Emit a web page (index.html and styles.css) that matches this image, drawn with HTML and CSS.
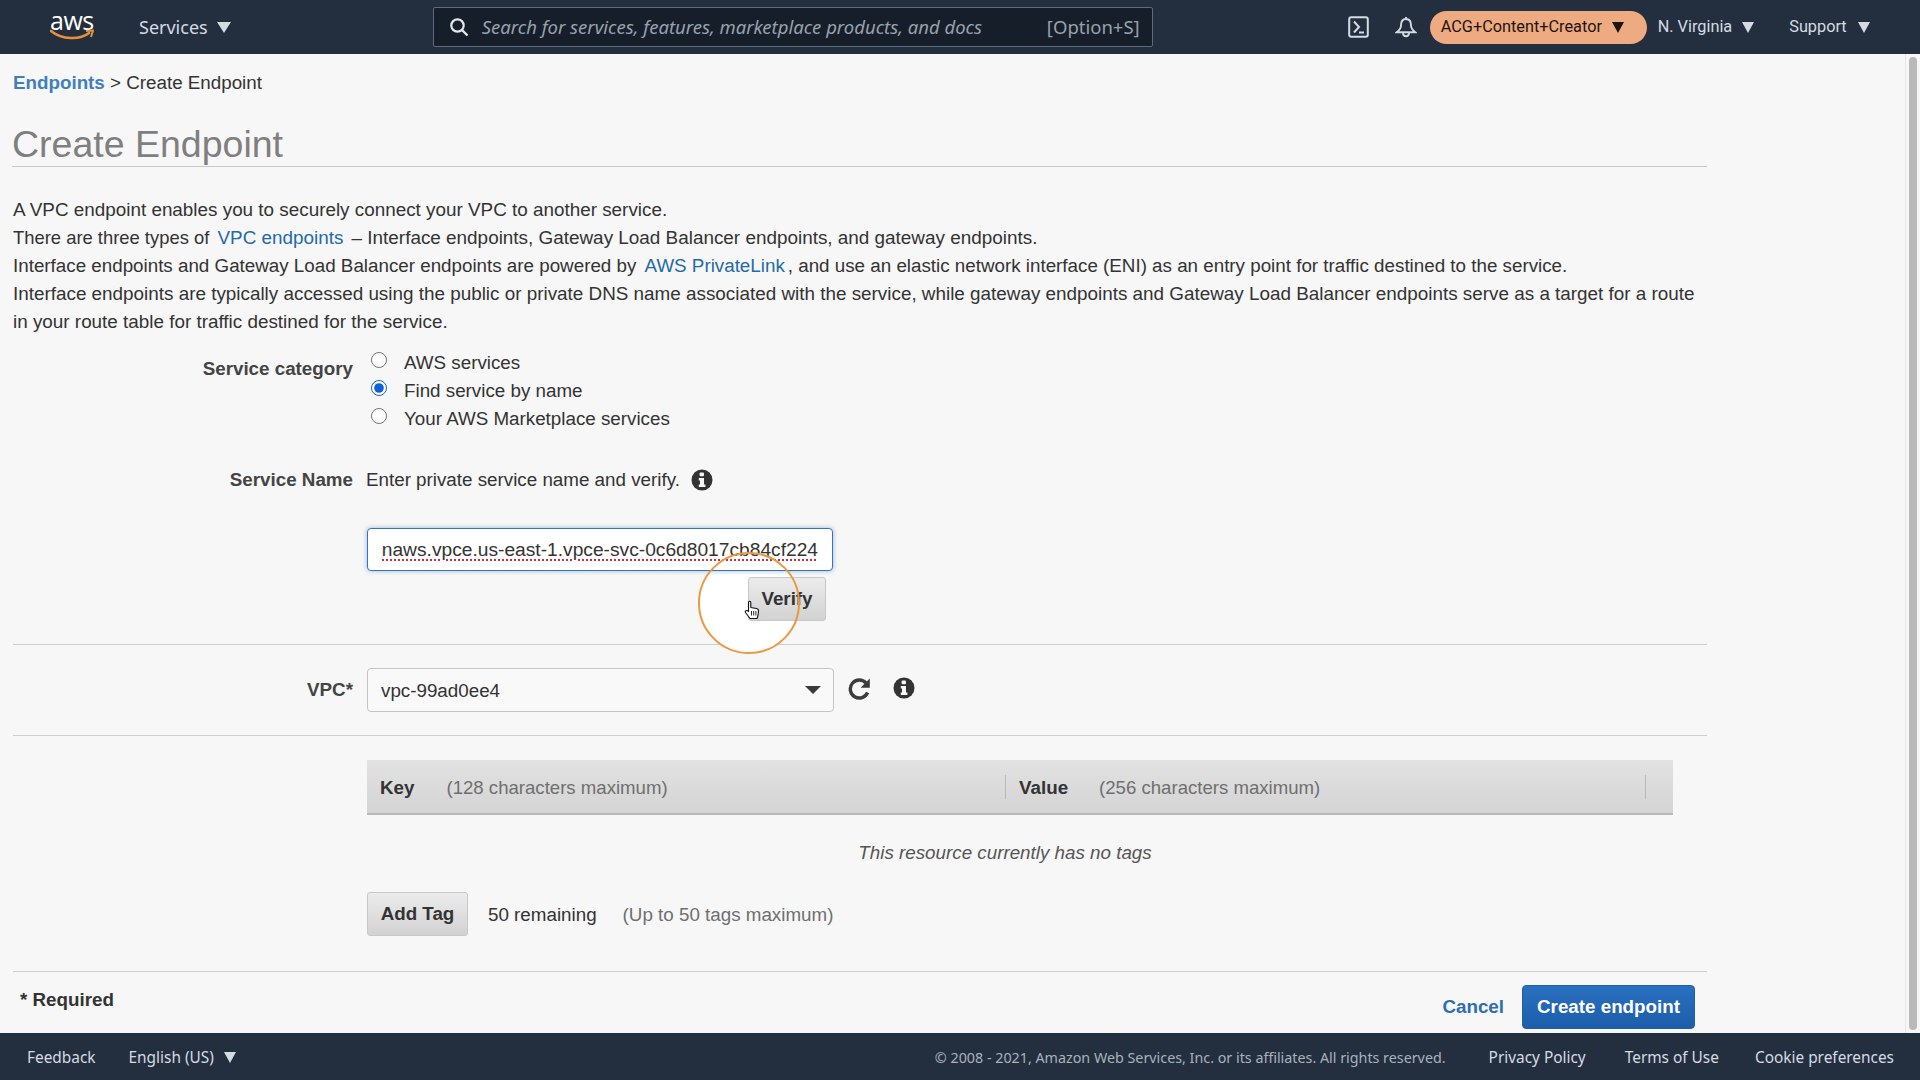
FILE: index.html
```html
<!DOCTYPE html>
<html lang="en">
<head>
<meta charset="utf-8">
<title>Create Endpoint</title>
<link rel="stylesheet" href="styles.css">
</head>
<body>
<header class="topbar">
  <div class="logo">
    <span class="logo-text">aws</span>
    <svg class="logo-smile" viewBox="0 0 44 12" width="44" height="12"><path d="M1 2 C12 11 30 11 39 4" fill="none" stroke="#e8913a" stroke-width="2.6" stroke-linecap="round"/><path d="M36 2 L43 1.5 L41 8" fill="none" stroke="#e8913a" stroke-width="2"/></svg>
  </div>
  <div class="nav nav-services">Services</div>
  <span class="caret caret-services"></span>
  <div class="search">
    <svg class="search-icon" viewBox="0 0 20 20" width="20" height="20"><circle cx="8.5" cy="8.5" r="6.2" fill="none" stroke="#e4e8ea" stroke-width="2.2"/><path d="M13 13 L18.5 18.5" stroke="#e4e8ea" stroke-width="2.4"/></svg>
    <span class="search-text">Search for services, features, marketplace products, and docs</span>
    <span class="search-key">[Option+S]</span>
  </div>
  <svg class="icon-console" viewBox="0 0 21 22" width="21" height="22"><rect x="1.2" y="1.2" width="18.6" height="19.6" rx="2" fill="none" stroke="#d5dbe2" stroke-width="2"/><path d="M6 5.5 L11 11 L6 16.5 M11 16.5 H16" fill="none" stroke="#d5dbe2" stroke-width="2"/></svg>
  <svg class="icon-bell" viewBox="0 0 22 22" width="22" height="22"><path d="M11 1 V3 M11 3 C7 3 6 6.5 6 9.5 C6 12.5 4.5 14 1.8 16.2 H20.2 C17.5 14 16 12.5 16 9.5 C16 6.5 15 3 11 3 Z M8 16.5 C8 21.5 14 21.5 14 16.5" fill="none" stroke="#d5dbe2" stroke-width="1.9"/></svg>
  <div class="pill"><span>ACG+Content+Creator</span><span class="caret caret-dark"></span></div>
  <div class="nav nav-region">N. Virginia</div>
  <span class="caret caret-small caret-region"></span>
  <div class="nav nav-support">Support</div>
  <span class="caret caret-small caret-support"></span>
</header>

<div class="workspace">
  <main class="content">
    <div class="breadcrumb"><a class="crumb-link">Endpoints</a> &gt; Create Endpoint</div>
    <h1 class="title">Create Endpoint</h1>
    <div class="intro">
      <p>A VPC endpoint enables you to securely connect your VPC to another service.</p>
      <p class="line-types"><span class="lead">There are three types of</span> <a class="link link-gap">VPC endpoints</a> <span class="trail">– Interface endpoints, Gateway Load Balancer endpoints, and gateway endpoints.</span></p>
      <p class="line-exact">Interface endpoints and Gateway Load Balancer endpoints are powered by <a class="link link-gap">AWS PrivateLink</a>, and use an elastic network interface (ENI) as an entry point for traffic destined to the service.</p>
      <p>Interface endpoints are typically accessed using the public or private DNS name associated with the service, while gateway endpoints and Gateway Load Balancer endpoints serve as a target for a route</p>
      <p>in your route table for traffic destined for the service.</p>
    </div>

    <div class="form-row row-category">
      <div class="form-label label-category">Service category</div>
      <div class="radios">
        <label class="radio"><input type="radio" name="cat"><span>AWS services</span></label>
        <label class="radio"><input type="radio" name="cat" checked><span>Find service by name</span></label>
        <label class="radio"><input type="radio" name="cat"><span>Your AWS Marketplace services</span></label>
      </div>
    </div>

    <div class="form-row row-name">
      <div class="form-label">Service Name</div>
      <div class="name-hint"><span>Enter private service name and verify.</span>
        <svg class="info info-name" viewBox="0 0 22 22" width="22" height="22"><circle cx="11" cy="11" r="10.5" fill="#333"/><rect x="8.6" y="3.6" width="4.4" height="3.6" rx="1" fill="#f7f7f7"/><path d="M7.8 9 H13 V15.6 H14.4 V18 H7.8 V15.6 H9 V11.4 H7.8 Z" fill="#f7f7f7"/></svg>
      </div>
    </div>

    <div class="service-input"><div class="service-clip"><span class="service-value">com.amazonaws.vpce.us-east-1.vpce-svc-0c6d8017cb84cf224</span></div></div>
    <div class="verify-row"><button class="btn btn-verify" type="button">Verify</button></div>

    <hr class="rule rule-first">

    <div class="form-row row-vpc">
      <div class="form-label">VPC*</div>
      <div class="select"><span class="select-value">vpc-99ad0ee4</span><span class="select-caret"></span></div>
      <svg class="refresh" viewBox="0 0 24 24" width="24" height="24"><path d="M19.6 15.5 A9 9 0 1 1 18 6" fill="none" stroke="#3c3c3c" stroke-width="3.4"/><path d="M21.8 1.5 V10.8 H12.6 Z" fill="#3c3c3c"/></svg>
      <svg class="info info-vpc" viewBox="0 0 22 22" width="22" height="22"><circle cx="11" cy="11" r="10.5" fill="#333"/><rect x="8.6" y="3.6" width="4.4" height="3.6" rx="1" fill="#f7f7f7"/><path d="M7.8 9 H13 V15.6 H14.4 V18 H7.8 V15.6 H9 V11.4 H7.8 Z" fill="#f7f7f7"/></svg>
    </div>

    <hr class="rule rule-second">

    <div class="tag-head">
      <div class="tag-col tag-key"><strong>Key</strong><span class="muted">(128 characters maximum)</span></div>
      <div class="tag-col tag-value"><strong>Value</strong><span class="muted">(256 characters maximum)</span></div>
    </div>
    <div class="tag-empty">This resource currently has no tags</div>
    <div class="tag-actions">
      <button class="btn btn-add" type="button">Add Tag</button>
      <span class="remaining">50 remaining</span>
      <span class="muted">(Up to 50 tags maximum)</span>
    </div>

    <hr class="rule rule-third">

    <div class="actions">
      <div class="required">* Required</div>
      <a class="cancel">Cancel</a>
      <button class="btn-primary" type="button">Create endpoint</button>
    </div>
  </main>
  <aside class="scrollbar"><div class="scroll-thumb"></div></aside>
</div>

<footer class="bottombar">
  <span class="foot-feedback">Feedback</span>
  <span class="foot-lang">English (US)</span>
  <span class="caret caret-lang"></span>
  <span class="copyright">© 2008 - 2021, Amazon Web Services, Inc. or its affiliates. All rights reserved.</span>
  <span class="foot-link foot-privacy">Privacy Policy</span>
  <span class="foot-link foot-terms">Terms of Use</span>
  <span class="foot-link foot-cookie">Cookie preferences</span>
</footer>

<div class="click-fill"></div>
<div class="click-ring"></div>
<svg class="hand" viewBox="0 0 16 20" width="16" height="20"><path d="M4.5 10 V2.5 C4.5 0.8 6.8 0.8 6.8 2.5 V7.5 L12.5 8.5 C14 8.8 14.6 9.6 14.5 11 L14 15.5 L13 18.5 H6 L1.5 12.5 C0.5 11 2.5 9.5 4.5 11.5 Z" fill="#fff" stroke="#111" stroke-width="1.1" stroke-linejoin="round"/><path d="M7.5 11 V15.5 M9.7 11 V15.5 M11.9 11 V15.5" stroke="#111" stroke-width="0.9"/></svg>
</body>
</html>
```

FILE: styles.css
```css
* { box-sizing: border-box; }
html, body { margin: 0; height: 100%; }
body {
  width: 1920px;
  height: 1080px;
  overflow: hidden;
  display: flex;
  flex-direction: column;
  position: relative;
  background: #f7f7f7;
  color: #333;
  font-family: "Liberation Sans", Arial, sans-serif;
  font-size: 18.8px;
  line-height: 28px;
}

/* top bar */
.topbar {
  height: 54px;
  flex: none;
  display: flex;
  align-items: center;
  background: #232f3e;
  font-family: "Roboto", sans-serif;
  font-size: 16.3px;
  color: #d5dbe2;
}
.logo { width: 44px; margin-left: 50px; position: relative; height: 40px; flex: none; }
.logo-text { position: absolute; left: 0; top: 1px; font-family: "Open Sans", sans-serif; font-size: 25px; line-height: 24px; color: #fff; letter-spacing: -0.5px; }
.logo-smile { position: absolute; left: 0; top: 22px; }
.nav { white-space: nowrap; }
.nav-services { margin-left: 45px; font-family: "Noto Sans", sans-serif; font-size: 18px; }
.caret {
  width: 0; height: 0; flex: none;
  border-left: 7px solid transparent;
  border-right: 7px solid transparent;
  border-top: 11px solid #d5dbe2;
}
.caret-small { border-left-width: 6px; border-right-width: 6px; }
.caret-services { margin-left: 9px; }
.search {
  width: 720px;
  height: 40px;
  margin-left: 202px;
  flex: none;
  display: flex;
  align-items: center;
  padding: 0 12px 0 15px;
  background: #161e2a;
  border: 1px solid #5f6b7a;
  border-radius: 2px;
  color: #98a2ad;
  font-family: "Noto Sans", sans-serif;
  font-style: italic;
  font-size: 18.5px;
}
.search-icon { flex: none; }
.search-text { margin-left: 13px; white-space: nowrap; flex: 1; }
.search-key { font-style: normal; white-space: nowrap; }
.icon-console { margin-left: 195px; flex: none; }
.icon-bell { margin-left: 26px; flex: none; }
.pill {
  width: 217px;
  height: 33px;
  margin-left: 13px;
  flex: none;
  display: flex;
  align-items: center;
  padding-left: 11px;
  gap: 10px;
  background: #eeaa80;
  border-radius: 17px;
  color: #1d1410;
  white-space: nowrap;
}
.caret-dark { border-left-width: 6.5px; border-right-width: 6.5px; border-top-color: #1d1410; }
.nav-region { margin-left: 11px; }
.caret-region { margin-left: 10px; }
.nav-support { margin-left: 35px; }
.caret-support { margin-left: 11px; }

/* workspace */
.workspace { flex: 1; min-height: 0; display: flex; }
.content { width: 1905px; flex: none; padding-left: 13px; padding-right: 198px; }
.scrollbar { width: 15px; flex: none; background: #f7f7f7; border-left: 1px solid #e6e6e6; padding: 3px; }
.scroll-thumb { width: 8px; height: 100%; border-radius: 4px; background: #b9b9b9; }

.breadcrumb { padding-top: 15px; height: 42px; }
.crumb-link { color: #3f7fbb; font-weight: 700; }
.title {
  margin: 20px 0 0 -1px;
  height: 51px;
  border-bottom: 1px solid #c8c8c8;
  font-size: 37.5px;
  line-height: 56px;
  font-weight: 400;
  color: #7f7f7f;
}
.intro { margin-top: 29px; font-size: 18.86px; }
.intro p { margin: 0; white-space: nowrap; }
.line-exact { font-size: 18.8px; }
.lead { font-size: 18.4px; }
.trail { font-size: 18.9px; }
.link { color: #1f6aa8; }
.link-gap { margin: 0 3px; }

.form-row { display: flex; align-items: flex-start; }
.form-label { width: 340px; flex: none; text-align: right; font-weight: 700; color: #444; margin-right: 13px; }
.label-category { padding-top: 7px; }
.row-category { margin-top: 12px; height: 84px; }
.radios { display: flex; flex-direction: column; }
.radio { display: flex; align-items: center; height: 28px; }
.radio input { width: 16px; height: 16px; margin: -5px 0 0 5px; accent-color: #0f62d6; }
.radio span { margin-left: 17px; padding-top: 2px; }
.row-name { margin-top: 34px; height: 28px; }
.name-hint { display: flex; align-items: center; }
.info { flex: none; }
.info-name { margin: -1px 0 0 11px; }

.service-input {
  position: relative;
  z-index: 2;
  margin: 34px 0 0 354px;
  width: 466px;
  height: 43px;
  padding: 7px 14px 0;
  background: #fff;
  border: 1px solid #3a73b5;
  border-radius: 4px;
  box-shadow: 0 0 5px rgba(70, 130, 210, .55);
}
.service-clip { display: flex; justify-content: flex-end; overflow: hidden; height: 33px; }
.service-value {
  white-space: nowrap;
  flex: none;
  font-size: 19.2px;
  text-decoration: underline dotted #d22b3c 2px;
  text-underline-offset: 3px;
}
.verify-row { position: relative; z-index: 2; margin: 6px 0 0 354px; width: 459px; display: flex; justify-content: flex-end; }
.btn {
  height: 44px;
  border: 1px solid #c8c8c8;
  border-radius: 3px;
  background: linear-gradient(#ececec, #d2d2d2);
  color: #333;
  font: 700 18.8px/28px "Liberation Sans", Arial, sans-serif;
  padding: 0;
}
.btn-verify { width: 78px; }
.btn-add { width: 101px; }

.rule { margin: 0; border: 0; height: 1px; background: #cfcfcf; }
.rule-first { margin-top: 23px; }
.row-vpc { margin-top: 23px; height: 44px; align-items: center; }
.select {
  width: 467px;
  height: 44px;
  margin-left: 1px;
  flex: none;
  display: flex;
  align-items: center;
  justify-content: space-between;
  padding: 0 12px 0 13px;
  background: #f9f9f9;
  border: 1px solid #c4c4c4;
  border-radius: 4px;
}
.select-value { padding-top: 2px; }
.select-caret {
  width: 0; height: 0;
  border-left: 8px solid transparent;
  border-right: 8px solid transparent;
  border-top: 8px solid #3a3a3a;
}
.refresh { margin: -2px 0 0 14px; flex: none; }
.info-vpc { margin: -4px 0 0 21px; }
.rule-second { margin-top: 23px; }

.tag-head {
  margin: 24px 0 0 354px;
  width: 1306px;
  height: 55px;
  display: flex;
  align-items: center;
  background: linear-gradient(#e2e2e2, #d4d4d4);
  border-bottom: 2px solid #b8b8b8;
}
.tag-col { display: flex; align-items: center; height: 24px; flex: none; border-right: 1px solid #b9b9b9; }
.tag-key { width: 639px; padding-left: 13px; }
.tag-value { width: 640px; padding-left: 13px; }
.tag-col strong { color: #333; padding-top: 2px; }
.tag-col .muted { font-size: 18.6px; padding-top: 2px; }
.tag-key .muted { margin-left: 32px; }
.tag-value .muted { margin-left: 31px; }
.muted { color: #6f6f6f; }
.tag-empty { margin: 24px 0 0 354px; width: 1276px; text-align: center; font-style: italic; color: #555; }
.tag-actions { margin: 25px 0 0 354px; display: flex; align-items: center; }
.remaining { margin-left: 20px; padding-top: 2px; }
.tag-actions .muted { margin-left: 26px; padding-top: 2px; }
.rule-third { margin-top: 35px; }

.actions { margin-top: 13px; height: 44px; display: flex; align-items: flex-start; padding: 0 12px 0 7px; }
.required { font-weight: 700; flex: 1; padding-top: 1px; }
.cancel { color: #2e6eae; font-weight: 700; margin-top: 8px; margin-right: 18px; }
.btn-primary {
  width: 173px;
  height: 44px;
  border: 1px solid #1f5fa8;
  border-radius: 4px;
  background: linear-gradient(#2a70c0, #1c5ea9);
  color: #fff;
  font: 700 18.8px/28px "Liberation Sans", Arial, sans-serif;
  padding: 0;
}

/* bottom bar */
.bottombar {
  height: 47px;
  flex: none;
  display: flex;
  align-items: center;
  padding-top: 2px;
  background: #232f3e;
  color: #d5dbe2;
  font-family: "Noto Sans", sans-serif;
  font-size: 15.4px;
  white-space: nowrap;
}
.foot-feedback { margin-left: 27px; }
.foot-lang { margin-left: 33px; }
.caret-lang { margin-left: 10px; border-left-width: 6.5px; border-right-width: 6.5px; }
.copyright { margin-left: auto; color: #a9b2bb; font-size: 14.3px; }
.foot-privacy { margin-left: 43px; }
.foot-terms { margin-left: 39px; }
.foot-cookie { margin-left: 36px; margin-right: 26px; }

/* screen-recording overlays */
.click-fill, .click-ring {
  position: absolute;
  left: 698px;
  top: 552px;
  width: 102px;
  height: 102px;
  border-radius: 50%;
}
.click-fill { z-index: 1; background: #fff; }
.click-ring { z-index: 3; border: 2px solid #e79a3f; }
.hand { position: absolute; z-index: 3; left: 744px; top: 600px; }
```
